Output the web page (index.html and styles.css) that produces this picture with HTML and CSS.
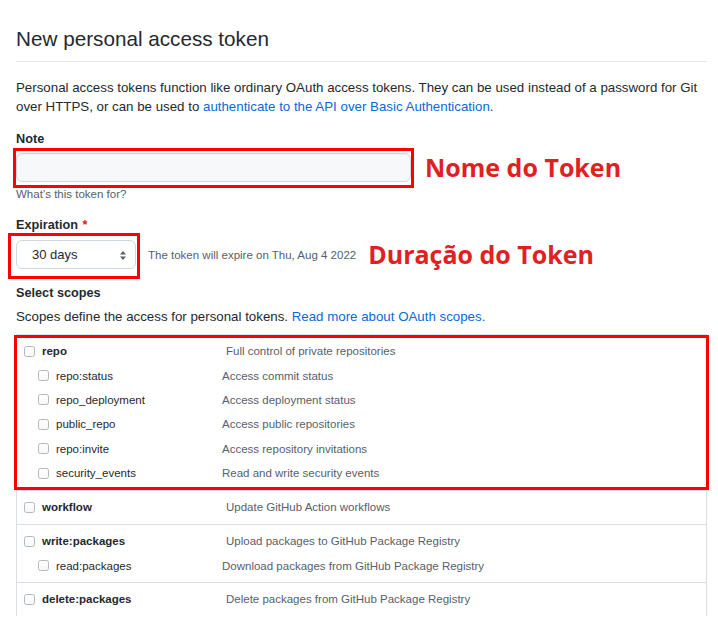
FILE: index.html
```html
<!DOCTYPE html>
<html lang="en">
<head>
<meta charset="utf-8">
<title>New personal access token</title>
<link rel="stylesheet" href="styles.css">
</head>
<body>
<main class="page">
  <h1 class="title">New personal access token</h1>
  <p class="intro">Personal access tokens function like ordinary OAuth access tokens. They can be used instead of a password for Git over HTTPS, or can be used to <a href="#" class="link">authenticate to the API over Basic Authentication</a>.</p>

  <label class="field-label label-note">Note</label>
  <div class="field-row row-note">
    <div class="marked marked-note"><input class="note-input" type="text"></div>
    <span class="callout callout-note">Nome do Token</span>
  </div>
  <p class="hint">What’s this token for?</p>

  <label class="field-label label-exp">Expiration <span class="req">*</span></label>
  <div class="field-row row-exp">
    <div class="marked marked-select">
      <div class="select">
        <span class="select-value">30 days</span>
        <svg class="select-arrows" width="6" height="9" viewBox="0 0 6 9"><polygon points="0,3.4 3,0 6,3.4" fill="#57606a"/><polygon points="0,5.6 3,9 6,5.6" fill="#57606a"/></svg>
      </div>
    </div>
    <span class="expire-note">The token will expire on Thu, Aug 4 2022</span>
    <span class="callout callout-dur">Duração do Token</span>
  </div>

  <label class="field-label label-scopes">Select scopes</label>
  <p class="scopes-intro">Scopes define the access for personal tokens. <a href="#" class="link">Read more about OAuth scopes.</a></p>

  <div class="scopes">
    <div class="group group-marked">
      <div class="row"><div class="name-cell"><span class="cb"></span><span class="name main">repo</span></div><span class="desc">Full control of private repositories</span></div>
      <div class="row sub"><div class="name-cell"><span class="cb"></span><span class="name">repo:status</span></div><span class="desc">Access commit status</span></div>
      <div class="row sub"><div class="name-cell"><span class="cb"></span><span class="name">repo_deployment</span></div><span class="desc">Access deployment status</span></div>
      <div class="row sub"><div class="name-cell"><span class="cb"></span><span class="name">public_repo</span></div><span class="desc">Access public repositories</span></div>
      <div class="row sub"><div class="name-cell"><span class="cb"></span><span class="name">repo:invite</span></div><span class="desc">Access repository invitations</span></div>
      <div class="row sub"><div class="name-cell"><span class="cb"></span><span class="name">security_events</span></div><span class="desc">Read and write security events</span></div>
    </div>
    <div class="group">
      <div class="row"><div class="name-cell"><span class="cb"></span><span class="name main">workflow</span></div><span class="desc">Update GitHub Action workflows</span></div>
    </div>
    <div class="group">
      <div class="row"><div class="name-cell"><span class="cb"></span><span class="name main">write:packages</span></div><span class="desc">Upload packages to GitHub Package Registry</span></div>
      <div class="row sub"><div class="name-cell"><span class="cb"></span><span class="name">read:packages</span></div><span class="desc">Download packages from GitHub Package Registry</span></div>
    </div>
    <div class="group">
      <div class="row"><div class="name-cell"><span class="cb"></span><span class="name main">delete:packages</span></div><span class="desc">Delete packages from GitHub Package Registry</span></div>
    </div>
  </div>
</main>
</body>
</html>
```

FILE: styles.css
```css
* { box-sizing: border-box; }

html, body {
  margin: 0;
  background: #ffffff;
}

body {
  font-family: "Liberation Sans", Arial, sans-serif;
  color: #24292f;
  overflow: hidden;
}

.page {
  padding: 0 11px 0 16px;
}

.title {
  margin: 0;
  padding: 25px 0 8px;
  font-size: 20.7px;
  line-height: 28px;
  font-weight: 400;
  color: #24292f;
  border-bottom: 1px solid #e3e6ea;
}

.intro {
  margin: 16px 0 0;
  font-size: 13.3px;
  line-height: 19px;
}

.link {
  color: #0969da;
  text-decoration: none;
}

.field-label {
  display: block;
  margin-top: 14px;
  font-size: 12.7px;
  line-height: 18px;
  font-weight: 700;
}

.label-scopes {
  margin-top: 15px;
}

.req {
  color: #cf222e;
  font-weight: 700;
  margin-left: 1px;
}

.field-row {
  display: flex;
  align-items: center;
  height: 29px;
  margin-top: 5px;
}

.row-exp {
  margin-top: 6px;
}

.marked {
  position: relative;
}

.marked::after {
  content: "";
  position: absolute;
  border: 3px solid #ff0000;
  pointer-events: none;
}

.marked-note::after {
  top: -5px;
  right: -3px;
  bottom: -6px;
  left: -3px;
}

.marked-select::after {
  top: -7px;
  right: -4px;
  bottom: -10px;
  left: -8px;
}

.note-input {
  display: block;
  width: 395px;
  height: 29px;
  margin: 0;
  border: 1px solid #d0d7de;
  border-radius: 6px;
  background: #f6f8fa;
  box-shadow: inset 0 1px 0 rgba(208, 215, 222, 0.25);
  font: inherit;
}

.callout {
  font-family: "Open Sans", "Noto Sans", sans-serif;
  font-weight: 700;
  font-size: 25px;
  line-height: 29px;
  color: #e1211f;
  white-space: nowrap;
}

.callout-note {
  margin-left: 14px;
}

.callout-dur {
  margin-left: 12px;
}

.hint {
  margin: 4px 0 0;
  font-size: 11.5px;
  line-height: 16px;
  color: #57606a;
}

.select {
  display: flex;
  align-items: center;
  justify-content: space-between;
  width: 120px;
  height: 29px;
  padding: 0 9px 0 15px;
  border: 1px solid #d0d7de;
  border-radius: 6px;
  background: #ffffff;
  font-size: 13px;
  color: #24292f;
}

.select-arrows {
  display: block;
  margin-top: 1px;
}

.expire-note {
  margin-left: 12px;
  font-size: 11.5px;
  color: #57606a;
  white-space: nowrap;
}

.scopes-intro {
  margin: 5px 0 0;
  font-size: 13.3px;
  line-height: 19px;
}

.scopes {
  margin-top: 8px;
  border: 1px solid #d8dee4;
  border-bottom: 0;
}

.group {
  position: relative;
  padding: 4px 0 4.6px;
  border-top: 1px solid #d8dee4;
}

.group:first-child {
  border-top: 0;
}

.group-marked::after {
  content: "";
  position: absolute;
  top: 0;
  right: -3px;
  bottom: 0;
  left: -3px;
  border: 3px solid #ff0000;
  pointer-events: none;
}

.row {
  display: flex;
  align-items: center;
  height: 24.4px;
  padding-left: 7px;
  font-size: 11.5px;
}

.name-cell {
  display: flex;
  align-items: center;
  flex: 0 0 202px;
}

.row.sub {
  padding-left: 21px;
}

.row.sub .name-cell {
  flex-basis: 184px;
}

.cb {
  display: block;
  width: 11px;
  height: 11px;
  margin-right: 7px;
  border: 1px solid #b4b8bd;
  border-radius: 2.5px;
  background: linear-gradient(#ffffff, #f6f7f8);
}

.name {
  color: #24292f;
}

.name.main {
  font-weight: 700;
}

.desc {
  color: #57606a;
  white-space: nowrap;
}
```
